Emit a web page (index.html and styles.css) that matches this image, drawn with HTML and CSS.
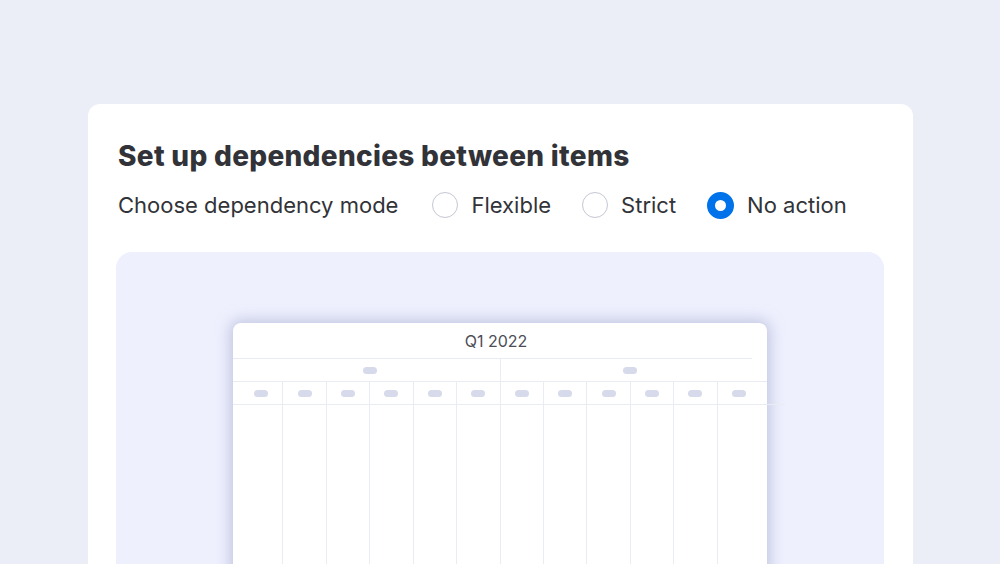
FILE: index.html
```html
<!DOCTYPE html>
<html>
<head>
<meta charset="utf-8">
<link rel="stylesheet" href="styles.css">
</head>
<body>
<div class="card">
  <h1 class="title">Set up dependencies between items</h1>
  <div class="mode-row">
    <span class="mode-label">Choose dependency mode</span>
    <label class="radio"><span class="dot"></span>Flexible</label>
    <label class="radio"><span class="dot"></span>Strict</label>
    <label class="radio"><span class="dot selected"></span>No action</label>
  </div>
  <div class="panel">
    <div class="gantt">
      <div class="g-title">Q1 2022</div>
      <div class="g-months">
        <div class="month"><span class="pill"></span></div>
        <div class="month"><span class="pill"></span></div>
      </div>
      <div class="g-weeks">
        <div class="week"><span class="pill"></span></div>
        <div class="week"><span class="pill"></span></div>
        <div class="week"><span class="pill"></span></div>
        <div class="week"><span class="pill"></span></div>
        <div class="week"><span class="pill"></span></div>
        <div class="week"><span class="pill"></span></div>
        <div class="week"><span class="pill"></span></div>
        <div class="week"><span class="pill"></span></div>
        <div class="week"><span class="pill"></span></div>
        <div class="week"><span class="pill"></span></div>
        <div class="week"><span class="pill"></span></div>
        <div class="week"><span class="pill"></span></div>
      </div>
      <div class="g-body">
        <div class="col"></div><div class="col"></div><div class="col"></div><div class="col"></div>
        <div class="col"></div><div class="col"></div><div class="col"></div><div class="col"></div>
        <div class="col"></div><div class="col"></div><div class="col"></div><div class="col"></div>
      </div>
    </div>
  </div>
</div>
</body>
</html>
```

FILE: styles.css
```css
* { box-sizing: border-box; }
html, body { margin: 0; padding: 0; }
body {
  width: 1000px;
  height: 564px;
  overflow: hidden;
  background: #ebeef7;
  font-family: "Inter", "Noto Sans", sans-serif;
  color: #323338;
  padding-top: 104px;
  padding-left: 88px;
}
.card {
  width: 825px;
  height: 460px;
  overflow: hidden;
  background: #ffffff;
  border-radius: 12px 12px 0 0;
  padding: 34px 28px 0 30px;
}
.title {
  margin: 0;
  font-family: "Inter", sans-serif;
  font-weight: 800;
  font-size: 28px;
  line-height: 36px;
  letter-spacing: 0.3px;
  color: #323338;
}
.mode-row {
  display: flex;
  align-items: center;
  height: 34px;
  margin-top: 14px;
  font-size: 22px;
  color: #323338;
}
.mode-label { margin-right: 34px; }
.radio {
  display: flex;
  align-items: center;
  gap: 13px;
  margin-right: 31px;
}
.dot {
  width: 26px;
  height: 26px;
  border-radius: 50%;
  border: 1.5px solid #c5c7d4;
  background: #fff;
}
.dot.selected {
  border: 8px solid #0073ea;
  width: 27px;
  height: 27px;
}
.panel {
  margin-top: 30px;
  margin-left: -2px;
  width: 768px;
  height: 400px;
  background: #eef0fe;
  border-radius: 16px;
  padding-top: 71px;
  padding-left: 117px;
}
.gantt {
  width: 534px;
  height: 330px;
  background: #fff;
  border-radius: 8px;
  box-shadow: 0 0 14px 3px rgba(165, 170, 205, 0.6);
  position: relative;
  padding: 0 7px;
}
.g-title {
  height: 36px;
  display: flex;
  align-items: center;
  justify-content: center;
  font-size: 16px;
  color: #4b4d57;
  border-bottom: 1px solid #eaecf4;
  margin: 0 8px 0 -7px;
  padding-left: 7px;
}
.g-months {
  display: flex;
  height: 23px;
  border-bottom: 1px solid #eaecf4;
  margin: 0 -7px;
  padding: 0 7px;
}
.month {
  flex: 1;
  display: flex;
  justify-content: center;
  align-items: center;
}
.month + .month { border-left: 1px solid #eaecf4; }
.g-weeks {
  display: flex;
  height: 23px;
  border-bottom: 1px solid #eaecf4;
  margin: 0 -25px 0 -7px;
  padding: 0 25px 0 7px;
}
.week {
  flex: 1;
  display: flex;
  justify-content: center;
  align-items: center;
}
.week + .week { border-left: 1px solid #eaecf4; }
.pill {
  display: block;
  width: 14px;
  height: 7px;
  border-radius: 4px;
  background: #d6daea;
}
.g-body {
  display: flex;
  height: 250px;
}
.col { flex: 1; }
.col + .col { border-left: 1px solid #eaecf4; }
```
